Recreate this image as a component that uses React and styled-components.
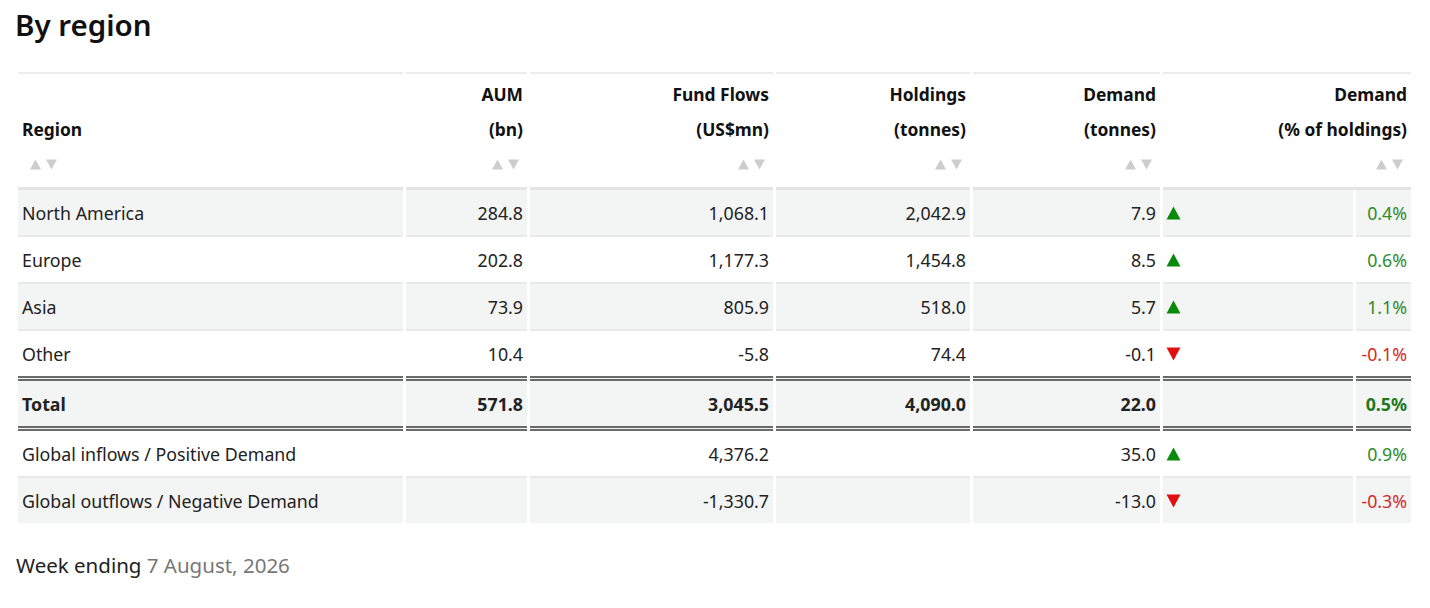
import React from 'react';
import styled, { createGlobalStyle } from 'styled-components';

const Global = createGlobalStyle`
  body {
    margin: 0;
    background: #fff;
    font-family: "Noto Sans", "Open Sans", sans-serif;
    color: #222;
  }
`;

const Page = styled.div`
  padding: 3px 15px 0 15px;
`;

const Title = styled.h2`
  margin: 0 0 26px 0;
  font-size: 29.5px;
  line-height: 43px;
  font-weight: 600;
  color: #111;
`;

const Table = styled.table`
  table-layout: fixed;
  border-collapse: separate;
  border-spacing: 3px 0;
  font-size: 17.8px;
`;

const Th = styled.th`
  padding: 3px 4px 5px 4px;
  border-top: 2px solid #ececec;
  border-bottom: 3px solid #e4e4e4;
  text-align: ${p => (p.left ? 'left' : 'right')};
  vertical-align: top;
  font-weight: 700;
  font-size: 17.4px;
  color: #111;
`;

const HeadLine = styled.div`
  height: 35px;
  line-height: 35px;
  white-space: nowrap;
`;

const Sort = styled.div`
  height: 35px;
  display: flex;
  align-items: center;
  justify-content: ${p => (p.left ? 'flex-start' : 'flex-end')};
  padding: 0 4px 0 8px;
`;

const SortIcon = styled.svg`
  width: 27px;
  height: 11px;
`;

const Row = styled.tr`
  background: ${p => (p.shade ? '#f3f4f4' : '#fff')};
`;

const Td = styled.td`
  height: 45px;
  padding: 0 4px;
  text-align: ${p => p.align || 'right'};
  font-weight: ${p => (p.total ? 700 : 400)};
  color: ${p => p.color || '#222'};
  border-bottom: ${p => (p.noline ? 'none' : '2px solid #e9e9e9')};
  border-top: ${p => (p.total ? '5px double #6a6a6a' : 'none')};
  ${p => p.total && 'border-bottom: 5px double #6a6a6a;'}
  white-space: nowrap;
`;

const Arrow = styled.svg`
  display: block;
  width: 15px;
  height: 14px;
  margin-left: -1px;
`;

const Footer = styled.p`
  margin: 28px 0 0 1px;
  font-size: 20.5px;
  color: #222;
`;

const DateText = styled.span`
  color: #777;
`;

const GREEN = '#2e8b2e';
const RED = '#d62828';

const Tri = ({ up }) => (
  <Arrow viewBox="0 0 15 14">
    {up ? (
      <polygon points="7.5,0.5 14.5,13.5 0.5,13.5" fill="#0a8a0a" />
    ) : (
      <polygon points="0.5,0.5 14.5,0.5 7.5,13.5" fill="#e01010" />
    )}
  </Arrow>
);

const SortArrows = ({ left }) => (
  <Sort left={left}>
    <SortIcon viewBox="0 0 27 11">
      <polygon points="5.5,0.5 11,10.5 0,10.5" fill="#cdcdcd" />
      <polygon points="16,0.5 27,0.5 21.5,10.5" fill="#cdcdcd" />
    </SortIcon>
  </Sort>
);

const rows = [
  ['North America', '284.8', '1,068.1', '2,042.9', '7.9', true, '0.4%'],
  ['Europe', '202.8', '1,177.3', '1,454.8', '8.5', true, '0.6%'],
  ['Asia', '73.9', '805.9', '518.0', '5.7', true, '1.1%'],
  ['Other', '10.4', '-5.8', '74.4', '-0.1', false, '-0.1%'],
];

const globals = [
  ['Global inflows / Positive Demand', '', '4,376.2', '', '35.0', true, '0.9%'],
  ['Global outflows / Negative Demand', '', '-1,330.7', '', '-13.0', false, '-0.3%'],
];

const heads = [
  ['AUM', '(bn)'],
  ['Fund Flows', '(US$mn)'],
  ['Holdings', '(tonnes)'],
  ['Demand', '(tonnes)'],
];

const widths = [385, 121, 243, 194, 187, 190, 55];

const DataRow = ({ r, shade, noline }) => (
  <Row shade={shade}>
    <Td align="left" noline={noline}>{r[0]}</Td>
    <Td noline={noline}>{r[1]}</Td>
    <Td noline={noline}>{r[2]}</Td>
    <Td noline={noline}>{r[3]}</Td>
    <Td noline={noline}>{r[4]}</Td>
    <Td align="left" noline={noline}><Tri up={r[5]} /></Td>
    <Td noline={noline} color={r[5] ? GREEN : RED}>{r[6]}</Td>
  </Row>
);

export default function App() {
  return (
    <Page>
      <Global />
      <Title>By region</Title>
      <Table style={{ width: widths.reduce((a, b) => a + b, 0) + 24 }}>
        <colgroup>
          {widths.map((w, i) => (
            <col key={i} style={{ width: w }} />
          ))}
        </colgroup>
        <thead>
          <tr>
            <Th left>
              <HeadLine />
              <HeadLine>Region</HeadLine>
              <SortArrows left />
            </Th>
            {heads.map(h => (
              <Th key={h[0] + h[1]}>
                <HeadLine>{h[0]}</HeadLine>
                <HeadLine>{h[1]}</HeadLine>
                <SortArrows />
              </Th>
            ))}
            <Th colSpan={2}>
              <HeadLine>Demand</HeadLine>
              <HeadLine>(% of holdings)</HeadLine>
              <SortArrows />
            </Th>
          </tr>
        </thead>
        <tbody>
          {rows.map((r, i) => (
            <DataRow key={r[0]} r={r} shade={i % 2 === 0} noline={i === rows.length - 1} />
          ))}
          <Row shade>
            <Td total align="left">Total</Td>
            <Td total>571.8</Td>
            <Td total>3,045.5</Td>
            <Td total>4,090.0</Td>
            <Td total>22.0</Td>
            <Td total />
            <Td total color="#1f7a1f">0.5%</Td>
          </Row>
          {globals.map((r, i) => (
            <DataRow key={r[0]} r={r} shade={i === 1} noline={i === 1} />
          ))}
        </tbody>
      </Table>
      <Footer>
        Week ending <DateText>7 August, 2026</DateText>
      </Footer>
    </Page>
  );
}
